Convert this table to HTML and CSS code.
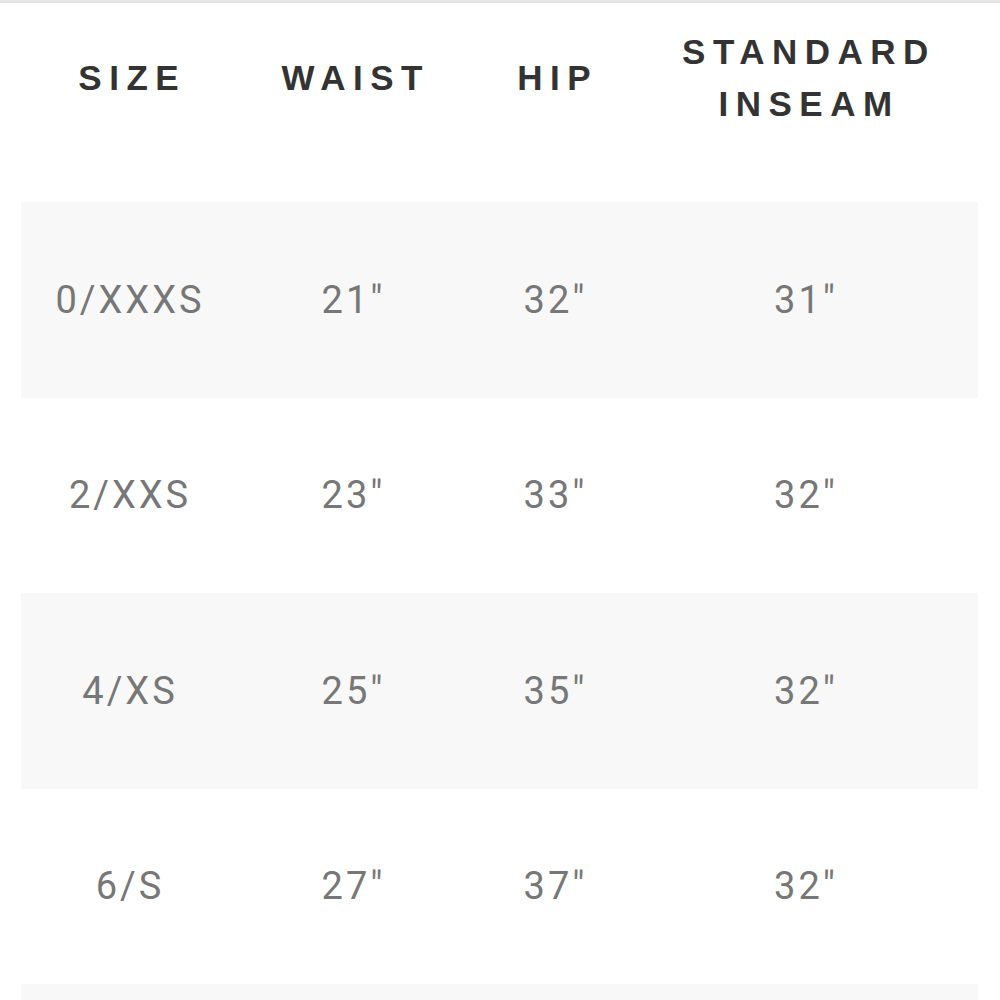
FILE: index.html
```html
<!DOCTYPE html>
<html>
<head>
<meta charset="utf-8">
<link rel="stylesheet" href="styles.css">
</head>
<body>
<div class="topline"></div>
<div class="wrap">
<table class="sizes">
  <colgroup>
    <col class="c1"><col class="c2"><col class="c3"><col class="c4">
  </colgroup>
  <thead>
    <tr><th>SIZE</th><th>WAIST</th><th>HIP</th><th>STANDARD<br>INSEAM</th></tr>
  </thead>
  <tbody>
    <tr class="alt"><td>0/XXXS</td><td>21"</td><td>32"</td><td>31"</td></tr>
    <tr><td>2/XXS</td><td>23"</td><td>33"</td><td>32"</td></tr>
    <tr class="alt"><td>4/XS</td><td>25"</td><td>35"</td><td>32"</td></tr>
    <tr><td>6/S</td><td>27"</td><td>37"</td><td>32"</td></tr>
    <tr class="alt"><td></td><td></td><td></td><td></td></tr>
  </tbody>
</table>
</div>
</body>
</html>
```
FILE: styles.css
```css
html, body {
  margin: 0;
  padding: 0;
  background: #ffffff;
  overflow: hidden;
}
.topline {
  height: 3px;
  background: #e5e5e5;
}
.wrap {
  padding: 0 22px 0 21px;
}
.sizes {
  width: 957px;
  border-collapse: collapse;
  table-layout: fixed;
}
.c1 { width: 215px; }
.c2 { width: 232px; }
.c3 { width: 172px; }
.c4 { width: 338px; }
.sizes th {
  font-family: "Liberation Sans", Arial, sans-serif;
  font-weight: 700;
  font-size: 35px;
  line-height: 52px;
  letter-spacing: 7.5px;
  color: #333333;
  text-align: center;
  vertical-align: middle;
  padding: 23px 0 72px 7.5px;
}
.sizes th:last-child {
  padding-left: 0;
}
.sizes td {
  font-family: Roboto, "Liberation Sans", sans-serif;
  font-weight: 400;
  font-size: 38px;
  letter-spacing: 3px;
  color: #777777;
  text-align: center;
  vertical-align: middle;
  height: 195.5px;
  padding: 0 0 0 3px;
}
.sizes td:last-child {
  padding: 0 6px 0 0;
}
.sizes tr.alt td {
  background: #f8f8f8;
}
```
